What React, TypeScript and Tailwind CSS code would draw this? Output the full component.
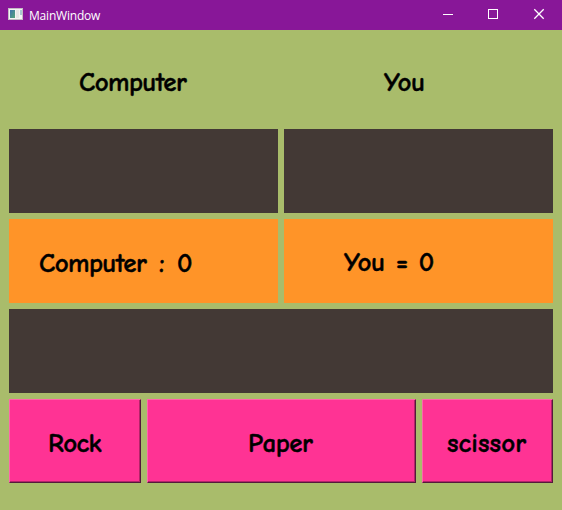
import type { ReactNode } from "react";

const ink =
  "whitespace-pre font-['Comic_Sans_MS','Comic_Neue',Lato,sans-serif] text-[27px] leading-[32px] font-bold text-black [-webkit-text-stroke:0.4px_black] [paint-order:stroke] [stroke-linejoin:round]";

function Choice({ width, inset, children }: { width: string; inset: string; children: ReactNode }) {
  return (
    <button
      className={`${width} ${inset} flex h-[84px] shrink-0 items-start border-t border-l border-r border-b border-t-[#ff64ad] border-l-[#ff64ad] border-r-[#55193c] border-b-[#55193c] bg-[#ff3394] pt-[28px] text-left shadow-[inset_-1px_-1px_0_#b32468]`}
    >
      {children}
    </button>
  );
}

export default function App() {
  return (
    <div className="flex h-[510px] w-[562px] flex-col overflow-hidden bg-[#a9bc6b]">
      <header className="flex h-[30px] shrink-0 items-center bg-[#881798] text-white">
        <svg className="ml-2 -mt-[2px] shrink-0" width="15" height="12" viewBox="0 0 15 12">
          <defs>
            <linearGradient id="screen" x1="0" y1="0" x2="1" y2="1">
              <stop offset="0" stopColor="#3f74ae" />
              <stop offset="1" stopColor="#55a577" />
            </linearGradient>
          </defs>
          <rect width="15" height="12" fill="#c4bcc4" />
          <rect x="1" y="1" width="13" height="10" fill="#f4f4f4" />
          <rect x="2" y="2" width="5" height="8" fill="url(#screen)" />
          <rect x="8" y="2" width="3" height="8" fill="#e6e6e6" />
          <rect x="12" y="2" width="2" height="5" fill="#a9cbd0" />
        </svg>
        <span className="ml-[6px] pt-px font-['Segoe_UI','Open_Sans',sans-serif] text-[12px] leading-4 tracking-[-0.2px]">MainWindow</span>
        <svg className="ml-auto shrink-0" width="138" height="30" viewBox="0 0 138 30" fill="none" stroke="white">
          <path d="M19 14.5h10M64.5 9.5h9v9h-9z" shapeRendering="crispEdges" />
          <path d="M110.3 9.3l9.4 9.4m0-9.4l-9.4 9.4" strokeWidth="1.3" />
        </svg>
      </header>
      <main className="flex flex-col gap-[6px] px-[9px] pt-[9px]">
        <div className="flex h-[84px] gap-[6px]">
          <div className="w-[269px] pt-[28px] pl-[70px]"><span className={`${ink} tracking-[-0.6px]`}>Computer</span></div>
          <div className="w-[269px] pt-[28px] pl-[100px]"><span className={`${ink} tracking-[-0.5px]`}>You</span></div>
        </div>
        <div className="flex h-[84px] gap-[6px]">
          <div className="w-[269px] bg-[#433935]" />
          <div className="w-[269px] bg-[#433935]" />
        </div>
        <div className="flex h-[84px] gap-[6px]">
          <div className="w-[269px] bg-[#ff9428] pt-[29px] pl-[30px]"><span className={`${ink} tracking-[-0.6px] [word-spacing:3.8px]`}>Computer : 0</span></div>
          <div className="w-[269px] bg-[#ff9428] pt-[28px] pl-[60px]"><span className={`${ink} tracking-[-0.5px] [word-spacing:2px]`}>You = 0</span></div>
        </div>
        <div className="h-[84px] bg-[#433935]" />
        <div className="flex h-[84px] gap-[6px]">
          <Choice width="w-[132px]" inset="pl-[38px]"><span className={`${ink} tracking-[-0.6px]`}>Rock</span></Choice>
          <Choice width="w-[269px]" inset="pl-[100px]"><span className={`${ink} tracking-[-0.5px]`}>Paper</span></Choice>
          <Choice width="w-[131px]" inset="pl-[24px]"><span className={`${ink} tracking-[0.1px]`}>scissor</span></Choice>
        </div>
      </main>
    </div>
  );
}
